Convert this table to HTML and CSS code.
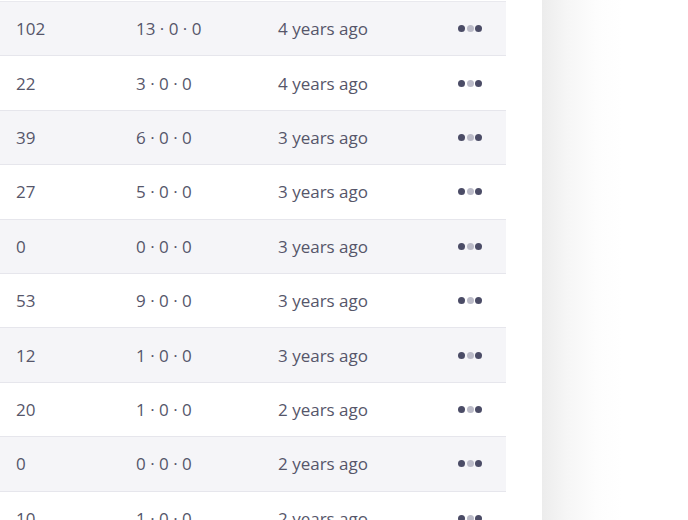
FILE: index.html
```html
<!DOCTYPE html>
<html>
<head>
<meta charset="utf-8">
<link rel="stylesheet" href="styles.css">
</head>
<body>
<div class="page">
  <div class="table">
    <div class="row alt"><span class="c1">102</span><span class="c2">13 · 0 · 0</span><span class="c3">4 years ago</span><span class="c4"><i class="d"></i><i class="d l"></i><i class="d"></i></span></div>
    <div class="row"><span class="c1">22</span><span class="c2">3 · 0 · 0</span><span class="c3">4 years ago</span><span class="c4"><i class="d"></i><i class="d l"></i><i class="d"></i></span></div>
    <div class="row alt"><span class="c1">39</span><span class="c2">6 · 0 · 0</span><span class="c3">3 years ago</span><span class="c4"><i class="d"></i><i class="d l"></i><i class="d"></i></span></div>
    <div class="row"><span class="c1">27</span><span class="c2">5 · 0 · 0</span><span class="c3">3 years ago</span><span class="c4"><i class="d"></i><i class="d l"></i><i class="d"></i></span></div>
    <div class="row alt"><span class="c1">0</span><span class="c2">0 · 0 · 0</span><span class="c3">3 years ago</span><span class="c4"><i class="d"></i><i class="d l"></i><i class="d"></i></span></div>
    <div class="row"><span class="c1">53</span><span class="c2">9 · 0 · 0</span><span class="c3">3 years ago</span><span class="c4"><i class="d"></i><i class="d l"></i><i class="d"></i></span></div>
    <div class="row alt"><span class="c1">12</span><span class="c2">1 · 0 · 0</span><span class="c3">3 years ago</span><span class="c4"><i class="d"></i><i class="d l"></i><i class="d"></i></span></div>
    <div class="row"><span class="c1">20</span><span class="c2">1 · 0 · 0</span><span class="c3">2 years ago</span><span class="c4"><i class="d"></i><i class="d l"></i><i class="d"></i></span></div>
    <div class="row alt"><span class="c1">0</span><span class="c2">0 · 0 · 0</span><span class="c3">2 years ago</span><span class="c4"><i class="d"></i><i class="d l"></i><i class="d"></i></span></div>
    <div class="row"><span class="c1">10</span><span class="c2">1 · 0 · 0</span><span class="c3">2 years ago</span><span class="c4"><i class="d"></i><i class="d l"></i><i class="d"></i></span></div>
  </div>
  <div class="gap"></div>
  <div class="panel"></div>
</div>
</body>
</html>
```
FILE: styles.css
```css
html, body {
  margin: 0;
  padding: 0;
  background: #ffffff;
  overflow: hidden;
}
body {
  font-family: "Open Sans", "Noto Sans", sans-serif;
  font-size: 17px;
  color: #56566a;
}
.page {
  display: flex;
  height: 520px;
  overflow: hidden;
}
.table {
  width: 506px;
  flex: none;
  padding-top: 1px;
}
.table::before {
  content: "";
  display: block;
  height: 1px;
  background: #e9e9ee;
}
.row {
  display: flex;
  align-items: center;
  height: 54.4px;
  box-sizing: border-box;
  border-bottom: 1px solid #e6e6ec;
  background: #ffffff;
}
.row.alt {
  background: #f5f5f8;
}
.c1 { width: 136px; padding-left: 16px; box-sizing: border-box; flex: none; }
.c2 { width: 142px; flex: none; }
.c3 { width: 180px; flex: none; }
.c4 {
  display: flex;
  gap: 1.5px;
}
.d {
  width: 7px;
  height: 7px;
  border-radius: 50%;
  background: #4b4c66;
}
.d.l {
  background: #bbbbc8;
}
.gap {
  width: 36px;
  flex: none;
}
.panel {
  flex: 1;
  background: linear-gradient(to right, #ececec 0px, #f6f6f6 25px, #fdfdfd 55px, #ffffff 80px);
}
```
